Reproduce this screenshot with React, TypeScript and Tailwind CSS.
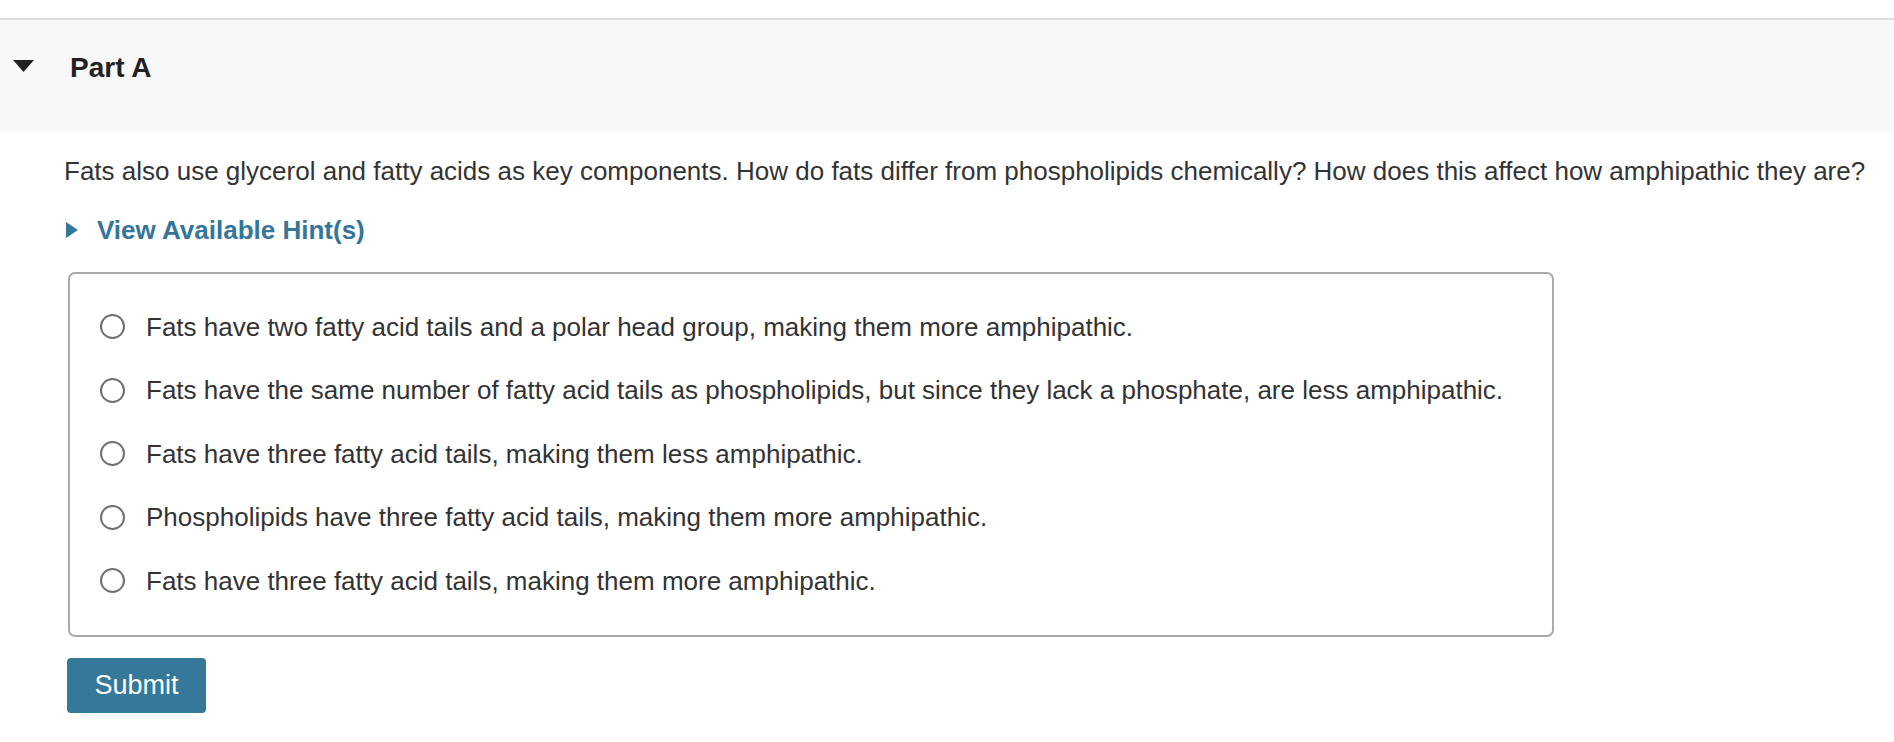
const options = [
  "Fats have two fatty acid tails and a polar head group, making them more amphipathic.",
  "Fats have the same number of fatty acid tails as phospholipids, but since they lack a phosphate, are less amphipathic.",
  "Fats have three fatty acid tails, making them less amphipathic.",
  "Phospholipids have three fatty acid tails, making them more amphipathic.",
  "Fats have three fatty acid tails, making them more amphipathic.",
];

export default function App() {
  return (
    <div className="min-h-[742px] bg-white text-[#333] font-['Liberation_Sans',Arial,sans-serif]">
      <div className="h-[18px]" />
      {/* Part header */}
      <div className="border-t-2 border-[#dcdcdc] bg-[#f8f8f8] h-[115px] pt-[32px]">
        <div className="flex h-[31px] items-center pl-[13px]">
          <svg width="21" height="12" viewBox="0 0 21 12" className="-mt-[3px]">
            <path d="M0 0 H21 L10.5 12 Z" fill="#222" />
          </svg>
          <h2 className="ml-[36px] text-[28px] font-bold leading-[31px] text-[#222]">Part A</h2>
        </div>
      </div>

      <div className="pl-[64px]">
        <p className="mt-[23px] text-[26px] leading-[30px]">
          Fats also use glycerol and fatty acids as key components. How do fats differ from phospholipids chemically? How does this affect how amphipathic they are?
        </p>

        <button className="mt-[29px] flex h-[30px] items-center text-[#33769a] cursor-pointer">
          <svg width="12" height="16" viewBox="0 0 12 16" className="ml-[2px]">
            <path d="M0 0 L12 8 L0 16 Z" fill="#33769a" />
          </svg>
          <span className="ml-[19px] text-[26px] font-bold leading-[30px]">View Available Hint(s)</span>
        </button>

        <div className="ml-[4px] mt-[27px] w-[1486px] rounded-[7px] border-2 border-[#aaa] pt-[21px] pb-[22px]">
          {options.map((opt) => (
            <label key={opt} className="flex h-[63.5px] items-center pl-[30px] cursor-pointer">
              <span className="h-[25px] w-[25px] shrink-0 rounded-full border-2 border-[#707070] bg-white" />
              <span className="ml-[21px] text-[26px] leading-[30px]">{opt}</span>
            </label>
          ))}
        </div>

        <button className="ml-[3px] mt-[21px] h-[55px] w-[139px] rounded-[4px] bg-[#36789a] text-[27px] leading-[30px] text-white cursor-pointer">
          Submit
        </button>
      </div>
    </div>
  );
}
